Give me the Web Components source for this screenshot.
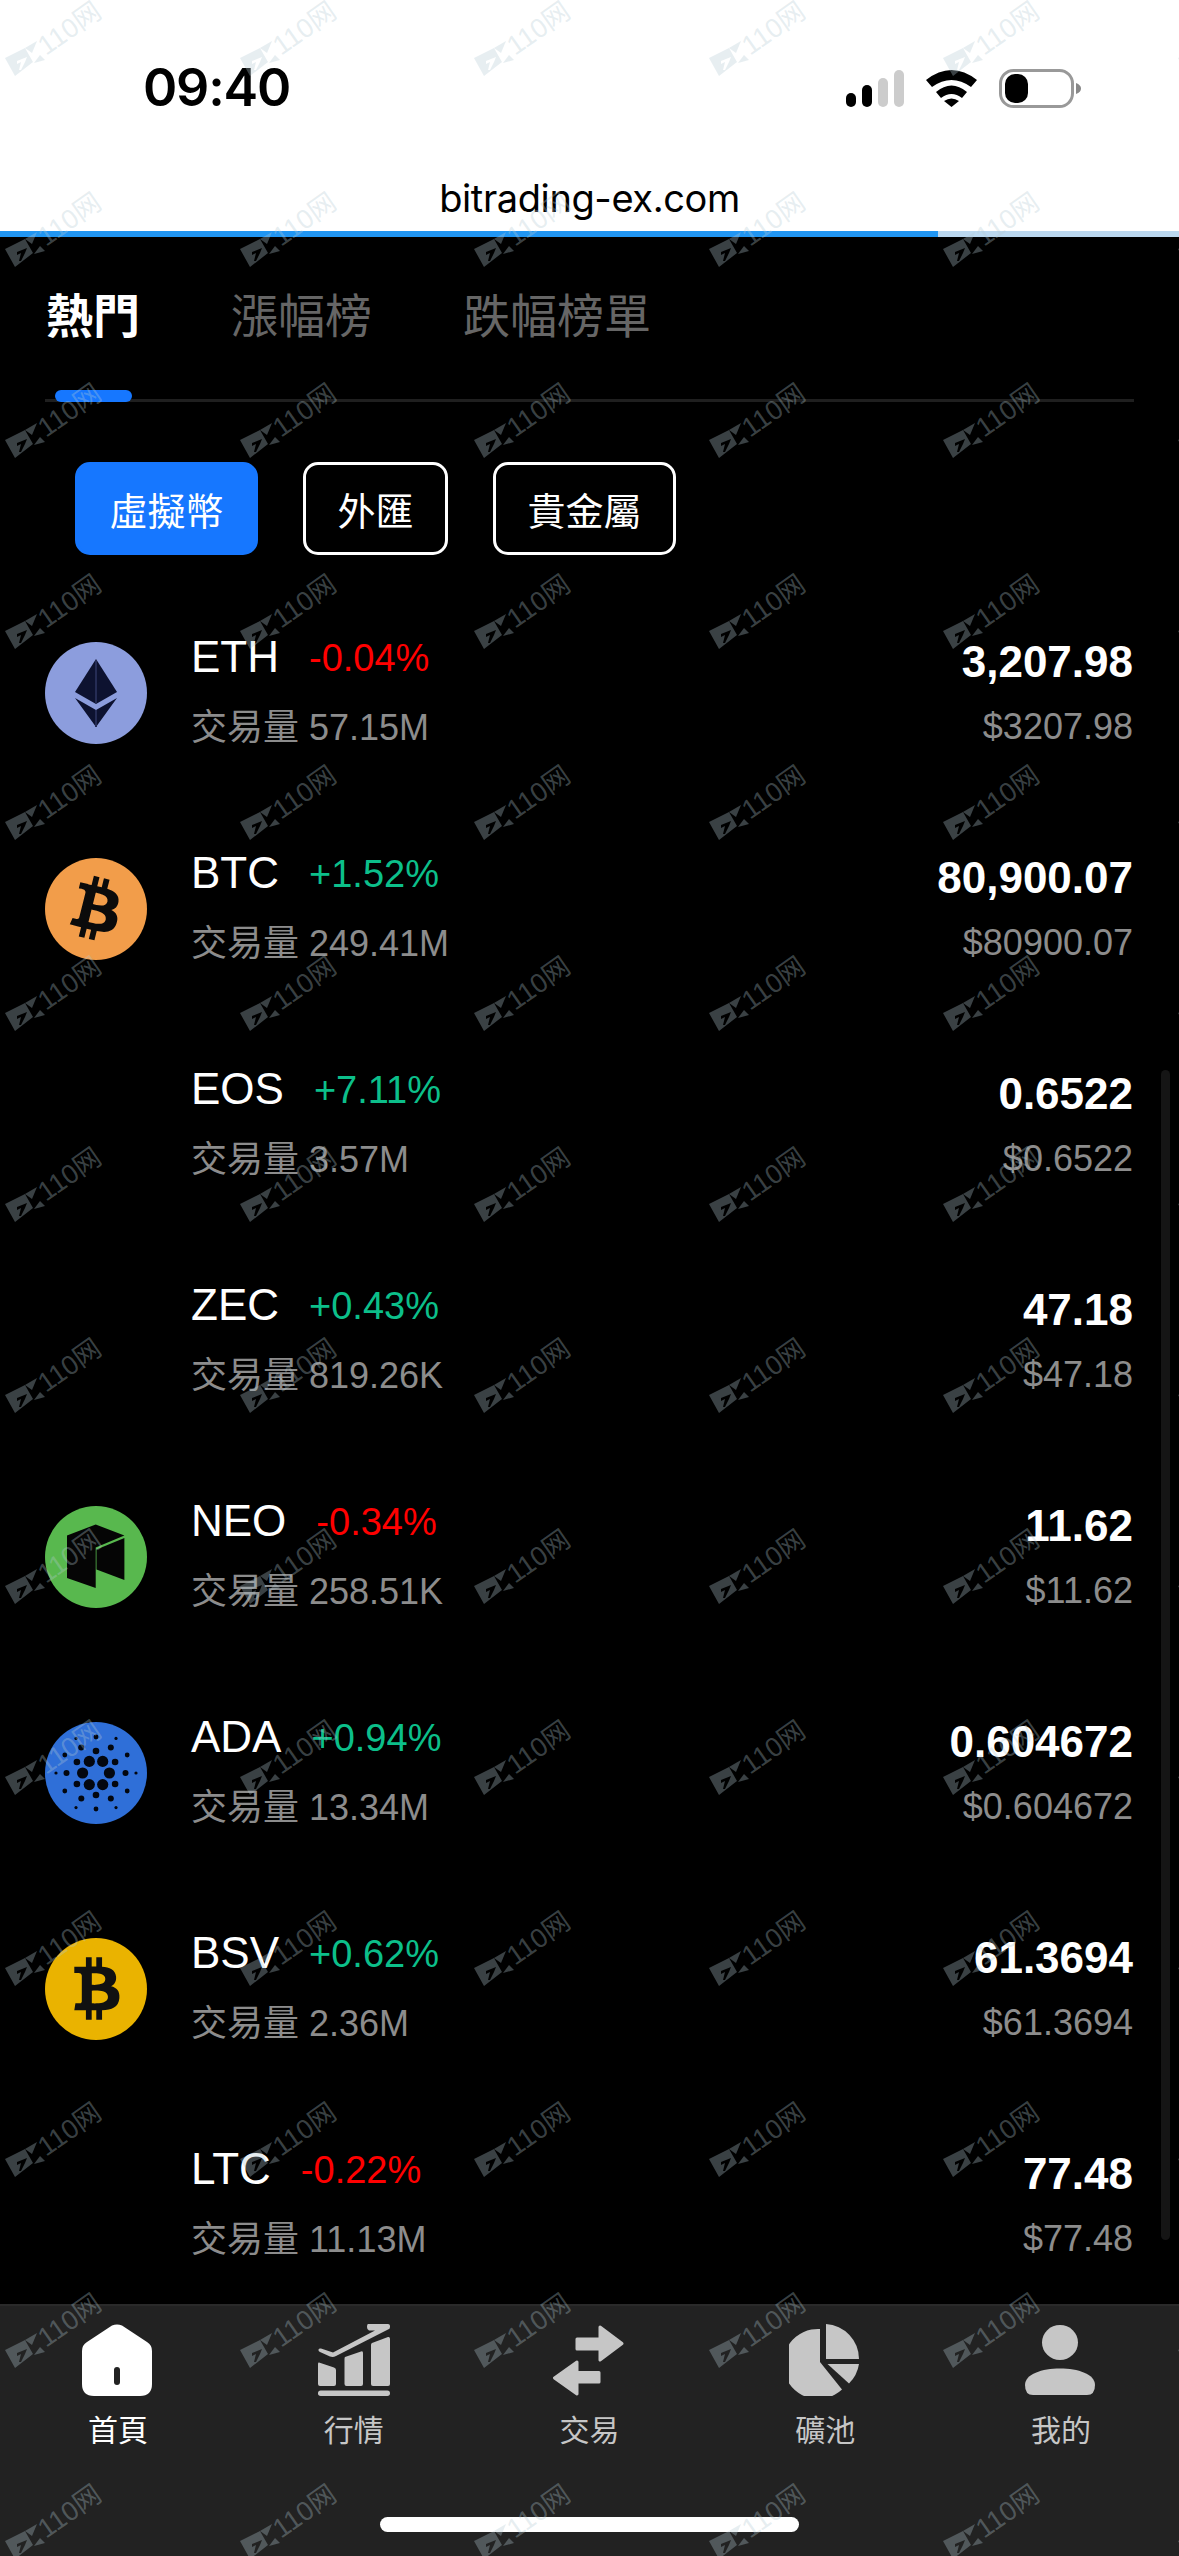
<!DOCTYPE html>
<html lang="zh-Hant">
<head>
<meta charset="utf-8">
<title>bitrading-ex.com</title>
<style>
  html, body { margin: 0; padding: 0; background: #000; }
</style>
</head>
<body>
<app-shell>
  <status-bar time="09:40" url="bitrading-ex.com"></status-bar>
  <load-progress></load-progress>
  <market-tabs>
    <span class="on">熱門</span>
    <span>漲幅榜</span>
    <span>跌幅榜單</span>
  </market-tabs>
  <filter-row>
    <filter-chip active>虛擬幣</filter-chip>
    <filter-chip>外匯</filter-chip>
    <filter-chip>貴金屬</filter-chip>
  </filter-row>
  <coin-list>
    <coin-row trend="down">
      <coin-icon slot="icon" kind="eth"></coin-icon>
      <span slot="name">ETH</span><span slot="change">-0.04%</span>
      <span slot="volume">交易量 57.15M</span>
      <span slot="price">3,207.98</span><span slot="usd">$3207.98</span>
    </coin-row>
    <coin-row trend="up">
      <coin-icon slot="icon" kind="btc"></coin-icon>
      <span slot="name">BTC</span><span slot="change">+1.52%</span>
      <span slot="volume">交易量 249.41M</span>
      <span slot="price">80,900.07</span><span slot="usd">$80900.07</span>
    </coin-row>
    <coin-row trend="up">
      <span slot="name">EOS</span><span slot="change">+7.11%</span>
      <span slot="volume">交易量 3.57M</span>
      <span slot="price">0.6522</span><span slot="usd">$0.6522</span>
    </coin-row>
    <coin-row trend="up">
      <span slot="name">ZEC</span><span slot="change">+0.43%</span>
      <span slot="volume">交易量 819.26K</span>
      <span slot="price">47.18</span><span slot="usd">$47.18</span>
    </coin-row>
    <coin-row trend="down">
      <coin-icon slot="icon" kind="neo"></coin-icon>
      <span slot="name">NEO</span><span slot="change">-0.34%</span>
      <span slot="volume">交易量 258.51K</span>
      <span slot="price">11.62</span><span slot="usd">$11.62</span>
    </coin-row>
    <coin-row trend="up">
      <coin-icon slot="icon" kind="ada"></coin-icon>
      <span slot="name">ADA</span><span slot="change">+0.94%</span>
      <span slot="volume">交易量 13.34M</span>
      <span slot="price">0.604672</span><span slot="usd">$0.604672</span>
    </coin-row>
    <coin-row trend="up">
      <coin-icon slot="icon" kind="bsv"></coin-icon>
      <span slot="name">BSV</span><span slot="change">+0.62%</span>
      <span slot="volume">交易量 2.36M</span>
      <span slot="price">61.3694</span><span slot="usd">$61.3694</span>
    </coin-row>
    <coin-row trend="down">
      <span slot="name">LTC</span><span slot="change">-0.22%</span>
      <span slot="volume">交易量 11.13M</span>
      <span slot="price">77.48</span><span slot="usd">$77.48</span>
    </coin-row>
  </coin-list>
  <tab-bar>
    <tab-item icon="home" active>首頁</tab-item>
    <tab-item icon="chart">行情</tab-item>
    <tab-item icon="swap">交易</tab-item>
    <tab-item icon="pie">礦池</tab-item>
    <tab-item icon="user">我的</tab-item>
  </tab-bar>
  <fx-watermark></fx-watermark>
</app-shell>

<script>
const SANS = '"Liberation Sans", "Noto Sans CJK TC", sans-serif';
const CJK = '"Noto Sans CJK TC", "Liberation Sans", sans-serif';

class AppShell extends HTMLElement {
  constructor() {
    super();
    this.attachShadow({ mode: 'open' });
    this.shadowRoot.innerHTML = `
    <style>
      :host {
        display: flex;
        flex-direction: column;
        position: relative;
        width: 1179px;
        height: 2556px;
        overflow: hidden;
        background: #000;
        color: #fff;
        font-family: ${SANS};
      }
    </style>
    <slot></slot>`;
  }
}

class StatusBar extends HTMLElement {
  constructor() {
    super();
    this.attachShadow({ mode: 'open' });
    this.shadowRoot.innerHTML = `
    <style>
      :host {
        display: block;
        height: 231px;
        flex: none;
        box-sizing: border-box;
        padding-top: 60px;
        background: #fff;
        color: #000;
        font-family: Inter, "Liberation Sans", sans-serif;
      }
      .top {
        display: flex;
        align-items: center;
        justify-content: space-between;
        height: 56px;
        padding: 0 98px 0 143px;
      }
      .time { font-size: 52px; font-weight: 600; letter-spacing: -1.2px; line-height: 56px; }
      .icons { display: flex; align-items: center; gap: 22px; }
      svg { display: block; }
      .url {
        margin-top: 57px;
        text-align: center;
        font-size: 38px;
        line-height: 50px;
        letter-spacing: -0.4px;
      }
    </style>
    <div class="top">
      <span class="time"></span>
      <div class="icons">
        <svg width="58" height="37" viewBox="0 0 58 37">
          <rect x="0" y="23" width="10" height="14" rx="5"/>
          <rect x="16" y="15" width="10" height="22" rx="5"/>
          <rect x="32" y="8" width="10" height="29" rx="5" fill="#ccc"/>
          <rect x="48" y="0" width="10" height="37" rx="5" fill="#ccc"/>
        </svg>
        <svg width="51" height="37" viewBox="0 0 51 37">
          <path d="M0 10Q25.500-10 51 10L45 17Q25.500 3 6 17Z"/>
          <path d="M10 22Q25.500 9 41 22L36 28Q25.500 20 15 28Z"/>
          <path d="M18 31Q25.500 26 33 31L25.500 37Z"/>
        </svg>
        <svg width="82" height="39" viewBox="0 0 82 39">
          <rect x="1.500" y="1.500" width="72" height="36" rx="13" fill="none" stroke="#999" stroke-width="3"/>
          <rect x="6" y="5" width="23" height="29" rx="10"/>
          <path d="M77 14Q82 16 82 19.500Q82 23 77 25Z" fill="#888"/>
        </svg>
      </div>
    </div>
    <div class="url"></div>`;
  }
  connectedCallback() {
    this.shadowRoot.querySelector('.time').textContent = this.getAttribute('time');
    this.shadowRoot.querySelector('.url').textContent = this.getAttribute('url');
  }
}

class LoadProgress extends HTMLElement {
  constructor() {
    super();
    this.attachShadow({ mode: 'open' });
    this.shadowRoot.innerHTML = `
    <style>
      :host { display: block; height: 6px; flex: none; background: #bbd8ef; }
      div { width: 938px; height: 100%; background: #2196f3; }
    </style>
    <div></div>`;
  }
}

class MarketTabs extends HTMLElement {
  constructor() {
    super();
    this.attachShadow({ mode: 'open' });
    this.shadowRoot.innerHTML = `
    <style>
      :host {
        display: flex;
        flex: none;
        position: relative;
        box-sizing: border-box;
        height: 165px;
        margin: 0 45px;
        padding: 43px 0 0 1px;
        gap: 91px;
        border-bottom: 3px solid #1f1f1f;
        font-family: ${CJK};
        font-size: 47px;
        line-height: 66px;
        color: #666;
      }
      ::slotted(.on) { color: #fff; font-weight: 700; }
      i {
        position: absolute;
        left: 10px;
        bottom: -3px;
        width: 77px;
        height: 12px;
        border-radius: 6px;
        background: #1677ff;
      }
    </style>
    <slot></slot>
    <i></i>`;
  }
}

class FilterRow extends HTMLElement {
  constructor() {
    super();
    this.attachShadow({ mode: 'open' });
    this.shadowRoot.innerHTML = `
    <style>
      :host { display: flex; flex: none; gap: 45px; padding: 60px 0 30px 75px; }
    </style>
    <slot></slot>`;
  }
}

class FilterChip extends HTMLElement {
  constructor() {
    super();
    this.attachShadow({ mode: 'open' });
    this.shadowRoot.innerHTML = `
    <style>
      :host {
        display: block;
        box-sizing: border-box;
        height: 93px;
        padding: 0 31.500px;
        border: 3px solid #fff;
        border-radius: 15px;
        font-family: ${CJK};
        font-size: 38px;
        line-height: 87px;
        color: #fff;
      }
      :host([active]) { background: #1677ff; border-color: #1677ff; }
    </style>
    <slot></slot>`;
  }
}

class CoinList extends HTMLElement {
  constructor() {
    super();
    this.attachShadow({ mode: 'open' });
    this.shadowRoot.innerHTML = `
    <style>
      :host { display: block; flex: 1; min-height: 0; overflow: hidden; position: relative; }
      .thumb {
        position: absolute;
        top: 485px;
        right: 9px;
        width: 9px;
        height: 1170px;
        border-radius: 5px;
        background: #151515;
      }
    </style>
    <slot></slot>
    <div class="thumb"></div>`;
  }
}

class CoinRow extends HTMLElement {
  constructor() {
    super();
    this.attachShadow({ mode: 'open' });
    this.shadowRoot.innerHTML = `
    <style>
      :host {
        display: flex;
        box-sizing: border-box;
        height: 216px;
        padding: 0 46px 0 45px;
      }
      .icon { width: 102px; height: 102px; flex: none; margin: 57px 44px 0 0; }
      .left { flex: 1; padding-top: 42px; }
      .right { text-align: right; padding-top: 47px; }
      .line1 { display: flex; gap: 30px; height: 60px; line-height: 60px; font-size: 44px; color: #fff; }
      .change { font-size: 38px; color: #ff0000; padding-top: 1px; }
      :host([trend="up"]) .change { color: #0cbf8a; }
      .volume { margin-top: 16px; font-size: 36px; line-height: 50px; color: #8c8c8c; }
      .price { font-size: 44px; line-height: 60px; font-weight: 700; color: #fff; }
      .usd { margin-top: 10px; font-size: 36px; line-height: 50px; color: #8c8c8c; }
    </style>
    <div class="icon"><slot name="icon"></slot></div>
    <div class="left">
      <div class="line1"><slot name="name"></slot><span class="change"><slot name="change"></slot></span></div>
      <div class="volume"><slot name="volume"></slot></div>
    </div>
    <div class="right">
      <div class="price"><slot name="price"></slot></div>
      <div class="usd"><slot name="usd"></slot></div>
    </div>`;
  }
}

const BTC_B = 'M46.103 27.444c.637-4.258-2.605-6.547-7.038-8.074l1.438-5.768-3.511-.875-1.4 5.616c-.923-.23-1.871-.447-2.813-.662l1.41-5.653-3.509-.875-1.439 5.766c-.764-.174-1.514-.346-2.242-.527l.004-.018-4.842-1.209-.934 3.75s2.605.597 2.55.634c1.422.355 1.679 1.296 1.636 2.042l-1.638 6.571c.098.025.225.061.365.117l-.371-.092-2.296 9.205c-.174.432-.615 1.08-1.609.834.035.051-2.552-.637-2.552-.637l-1.743 4.019 4.569 1.139c.85.213 1.683.436 2.503.646l-1.453 5.834 3.507.875 1.439-5.772c.958.26 1.888.5 2.798.726l-1.434 5.745 3.511.875 1.453-5.823c5.987 1.133 10.489.676 12.384-4.739 1.527-4.36-.076-6.875-3.226-8.515 2.294-.529 4.022-2.038 4.483-5.155zM38.08 38.69c-1.085 4.36-8.426 2.003-10.806 1.412l1.928-7.729c2.38.594 10.012 1.77 8.878 6.317zm1.086-11.309c-.99 3.966-7.1 1.951-9.082 1.457l1.748-7.008c1.982.494 8.365 1.416 7.334 5.551z';

function adaDots() {
  // rings of the cardano mark: radius, dot size, start angle
  const rings = [[13.4, 5.6, 0], [22, 3.3, 30], [29.5, 3, 0], [36, 2.4, 30], [40, 1.6, 0]];
  let dots = '<circle cx="51" cy="51" r="0"/>';
  rings.forEach(([ringR, r, start]) => {
    for (let i = 0; i < 6; i++) {
      const a = (start + i * 60) * Math.PI / 180;
      dots += `<circle cx="${(51 + ringR * Math.cos(a)).toFixed(1)}" cy="${(51 + ringR * Math.sin(a)).toFixed(1)}" r="${r}"/>`;
    }
  });
  return dots;
}

const COIN_ART = {
  eth: `<circle cx="51" cy="51" r="51" fill="#8c9ddd"/>
    <path d="M51 17L72 50L51 62L30 50Z" fill="#0d1230"/>
    <path d="M51 18V61" stroke="#252c55" stroke-width="2"/>
    <path d="M30 56L51 68L72 56L51 85Z" fill="#0d1230"/>
    <path d="M51 68V85" stroke="#252c55" stroke-width="2"/>`,
  btc: `<circle cx="51" cy="51" r="51" fill="#f29d4a"/>
    <g transform="scale(1.5938)"><path d="${BTC_B}" fill="#0b0b0b"/></g>`,
  bsv: `<circle cx="51" cy="51" r="51" fill="#eab300"/>
    <g transform="rotate(-14 51 51) scale(1.5938)"><path d="${BTC_B}" fill="#111"/></g>`,
  neo: `<circle cx="51" cy="51" r="51" fill="#58b84e"/>
    <path d="M22 29.500L50.700 18.500L79.400 29.500L50.700 41.500V82L22 72Z" fill="#050505"/>
    <path d="M51.500 43.500L79.400 32V74L51.500 63.500Z" fill="#050505"/>`,
  ada: `<circle cx="51" cy="51" r="51" fill="#2f6fd8"/><g fill="#03070f">${adaDots()}</g>`
};

class CoinIcon extends HTMLElement {
  constructor() {
    super();
    this.attachShadow({ mode: 'open' });
  }
  connectedCallback() {
    const art = COIN_ART[this.getAttribute('kind')];
    this.shadowRoot.innerHTML = `
    <style>
      :host { display: block; width: 102px; height: 102px; }
      svg { display: block; }
    </style>
    <svg width="102" height="102" viewBox="0 0 102 102">${art}</svg>`;
  }
}

class TabBar extends HTMLElement {
  constructor() {
    super();
    this.attachShadow({ mode: 'open' });
    this.shadowRoot.innerHTML = `
    <style>
      :host {
        display: block;
        flex: none;
        box-sizing: border-box;
        height: 252px;
        padding-top: 18px;
        border-top: 2px solid #2a2a2a;
        background: #222;
      }
      .items { display: grid; grid-template-columns: repeat(5, 1fr); }
      .home-line {
        width: 419px;
        height: 15px;
        margin: 69px auto 0;
        border-radius: 8px;
        background: #fff;
      }
    </style>
    <div class="items"><slot></slot></div>
    <div class="home-line"></div>`;
  }
}

const TAB_ICONS = {
  home: `<path d="M30 1.500Q35-.5 40 1.500L65 18Q70 21 70 27V60Q70 72 58 72H12Q0 72 0 60V27Q0 21 5 18Z"/>
    <rect x="32" y="43" width="6" height="18" rx="3" fill="#222"/>`,
  chart: `<path d="M1 38.500Q0 38 0 40V60Q0 62 2 62H16Q18 62 18 60V46Q18 44 16 43.500Z"/>
    <path d="M27 33Q26.500 33.500 26.500 35V60Q26.500 62 28.500 62H43Q45 62 45 60V29Q45 26.500 43 27.500Z"/>
    <path d="M54 19Q53 19.500 53 21V60Q53 62 55 62H70Q72 62 72 60V15Q72 12.500 70 13Z"/>
    <rect x="0" y="66.500" width="72" height="5.500" rx="2.700"/>
    <path d="M50 0H70Q72 0 72 2V3Q72 5 70 5.500L18 32Q15 33.500 12 32.500L2 28Q0 27 .5 25.500Q1 24 3 24.500L15 28.500L57 6.500H51Q49 6 49 3Q49 0 50 0Z"/>`,
  swap: `<g stroke="currentColor" stroke-width="3" stroke-linejoin="round">
      <path d="M24 15H47V3L69 19.500L47 36V25H24Z"/>
      <path d="M46 48.500H24V38L1.500 54L24 70V58H46Z"/>
    </g>`,
  pie: `<path d="M37 0A35 35 0 0 1 70 35H37Z"/>
    <path d="M38.500 40H70A35 35 0 0 1 60 59.500Z"/>
    <path d="M31 5V38L53 65.500A35 35 0 1 1 31 5Z"/>`,
  user: `<ellipse cx="35" cy="18.500" rx="18" ry="17.500"/>
    <path d="M0 61C0 50 17 44.500 35 44.500C53 44.500 70 50 70 61Q70 71 62 71H8Q0 71 0 61Z"/>`
};

class TabItem extends HTMLElement {
  constructor() {
    super();
    this.attachShadow({ mode: 'open' });
  }
  connectedCallback() {
    const art = TAB_ICONS[this.getAttribute('icon')];
    this.shadowRoot.innerHTML = `
    <style>
      :host {
        display: flex;
        flex-direction: column;
        align-items: center;
        color: #c6c6c6;
        font-family: ${CJK};
        font-size: 30px;
        line-height: 40px;
      }
      :host([active]) { color: #fff; }
      svg { display: block; fill: currentColor; margin-bottom: 12px; }
    </style>
    <svg width="72" height="72" viewBox="0 0 72 72">${art}</svg>
    <slot></slot>`;
  }
}

class FxWatermark extends HTMLElement {
  constructor() {
    super();
    this.attachShadow({ mode: 'open' });
    const tile = `
      <div class="tile"><svg width="110" height="80" viewBox="0 0 110 80">
        <path fill-rule="evenodd" d="M5 58L25 48L33 62L15 76ZM17 61L27 57L25 62L21 70L19 70L21 62L17 64Z"/>
        <path d="M25 48L37 41L32 53Z"/>
        <path d="M34 63L40 55L45 60Z"/>
        <text transform="translate(46 56) rotate(-35)" font-family="Liberation Sans, sans-serif" font-size="27">110<tspan font-family="Noto Sans CJK SC, sans-serif">网</tspan></text>
      </svg></div>`;
    this.shadowRoot.innerHTML = `
    <style>
      :host {
        position: absolute;
        inset: 0;
        pointer-events: none;
        display: grid;
        grid-template-columns: repeat(6, 234.5px);
        grid-auto-rows: 191px;
        padding: 0 0 0 0;
        overflow: hidden;
      }
      svg { display: block; fill: rgba(181, 203, 212, .32); }
    </style>
    ${tile.repeat(6 * 14)}`;
  }
}

customElements.define('app-shell', AppShell);
customElements.define('status-bar', StatusBar);
customElements.define('load-progress', LoadProgress);
customElements.define('market-tabs', MarketTabs);
customElements.define('filter-row', FilterRow);
customElements.define('filter-chip', FilterChip);
customElements.define('coin-list', CoinList);
customElements.define('coin-row', CoinRow);
customElements.define('coin-icon', CoinIcon);
customElements.define('tab-bar', TabBar);
customElements.define('tab-item', TabItem);
customElements.define('fx-watermark', FxWatermark);
</script>
</body>
</html>
